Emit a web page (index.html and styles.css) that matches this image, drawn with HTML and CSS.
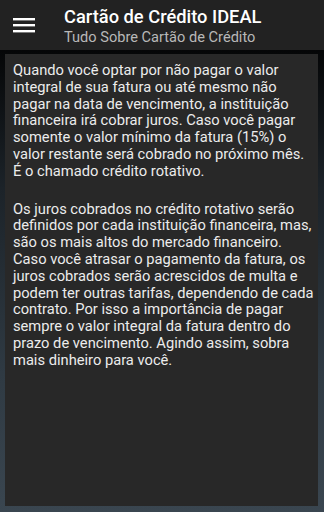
FILE: index.html
```html
<!DOCTYPE html>
<html lang="pt-BR">
<head>
    <meta charset="UTF-8">
    <title>Cartão de Crédito IDEAL</title>
    <link rel="stylesheet" href="styles.css">
</head>
<body>
  <div class="app">
      <header class="toolbar">
          <div class="menu-btn">
              <svg width="22" height="16" viewBox="0 0 22 16">
                  <rect x="0" y="1" width="22" height="2.4" fill="#fff"/>
                  <rect x="0" y="7" width="22" height="2.4" fill="#fff"/>
                  <rect x="0" y="13" width="22" height="2.4" fill="#fff"/>
              </svg>
          </div>
          <div class="titles">
              <h1 class="title">Cartão de Crédito IDEAL</h1>
              <p class="subtitle">Tudo Sobre Cartão de Crédito</p>
          </div>
      </header>
      <main class="page">
          <div class="card">
              <p class="text">Quando você optar por não pagar o valor integral de sua fatura ou até mesmo não pagar na data de vencimento, a instituição financeira irá cobrar juros. Caso você pagar somente o valor mínimo da fatura (15%) o valor restante será cobrado no próximo mês. É o chamado crédito rotativo.</p>
              <p class="text">Os juros cobrados no crédito rotativo serão definidos por cada instituição financeira, mas, são os mais altos do mercado financeiro. Caso você atrasar o pagamento da fatura, os juros cobrados serão acrescidos de multa e podem ter outras tarifas, dependendo de cada contrato. Por isso a importância de pagar sempre o valor integral da fatura dentro do prazo de vencimento. Agindo assim, sobra mais dinheiro para você.</p>
          </div>
      </main>
  </div>
</body>
</html>
```
FILE: styles.css
```css
                                /*General Style*/

*
{
    box-sizing: border-box;
    margin: 0;
    padding: 0;
    font-family: Roboto, "Noto Sans", sans-serif;
}
body
{
    background-color: #000;
}
.app
{
    width: 324px;
    height: 512px;
    display: flex;
    flex-direction: column;
}

                                /*TOOLBAR*/

.toolbar
{
    height: 50px;
    flex-shrink: 0;
    display: flex;
    align-items: center;
    background-color: #222222;
}
.menu-btn
{
    width: 64px;
    padding-left: 13px;
    display: flex;
    align-items: center;
}
.menu-btn svg
{
    display: block;
}
.titles
{
    display: flex;
    flex-direction: column;
    padding-top: 2px;
}
.title
{
    font-size: 18.3px;
    font-weight: 500;
    line-height: 21px;
    color: #fff;
}
.subtitle
{
    font-size: 14.6px;
    line-height: 20px;
    color: #b8b8b8;
}

                                /*CONTENT*/

.page
{
    flex: 1;
    padding: 4px 6px 6px 5px;
    display: flex;
    background: linear-gradient(180deg, #050607 0%, #1c2329 30%, #2f3a43 70%, #3a4650 100%);
}
.card
{
    flex: 1;
    padding: 8px 4px 8px 8px;
    background-color: #282828;
}
.text
{
    font-size: 14.7px;
    line-height: 16.8px;
    color: #ececec;
    margin-bottom: 21px;
}
```
